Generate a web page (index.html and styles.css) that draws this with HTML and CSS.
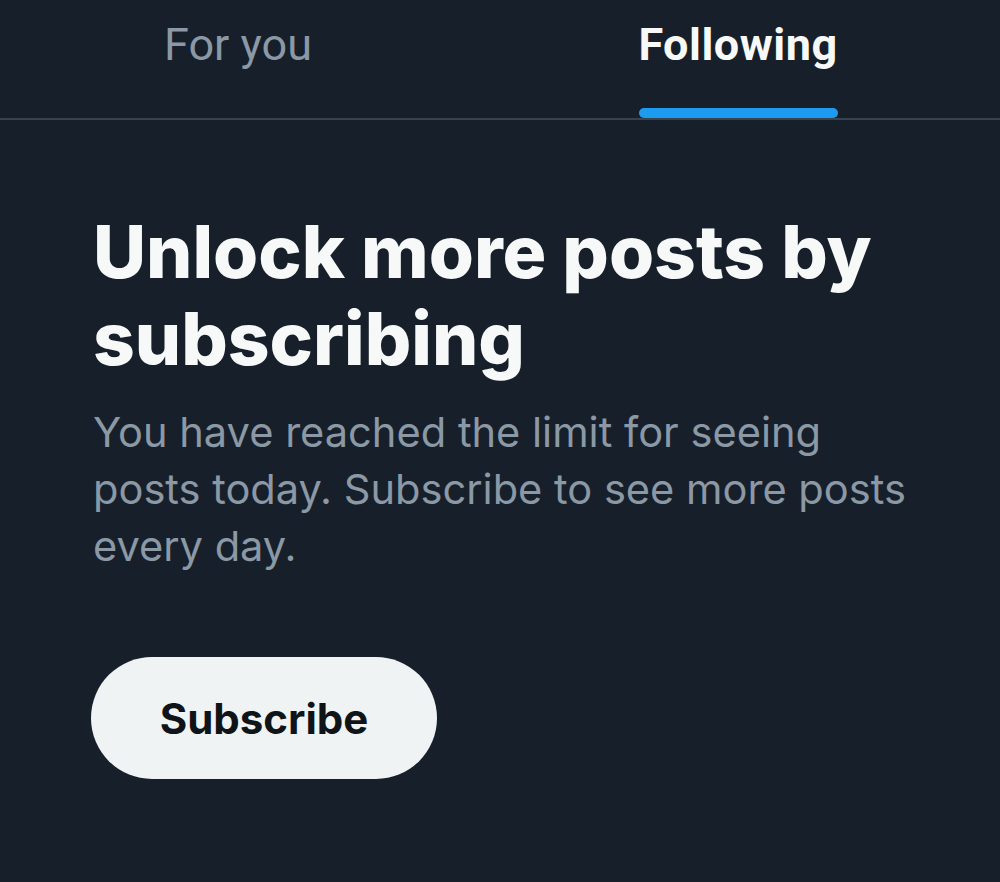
FILE: index.html
```html
<!DOCTYPE html>
<html lang="en">
<head>
    <meta charset="UTF-8">
    <meta name="viewport" content="width=device-width, initial-scale=1.0">
    <title>Following</title>
    <link rel="stylesheet" href="styles.css">
</head>
<body>
    <header class="tabs">
        <a class="tab" href="#">
            <span class="tab-label">For you</span>
        </a>
        <a class="tab active" href="#">
            <span class="tab-label">Following</span>
        </a>
    </header>
    <main class="limit">
        <h1 class="limit-title">Unlock more posts by subscribing</h1>
        <p class="limit-text">You have reached the limit for seeing posts today. Subscribe to see more posts every day.</p>
        <a class="subscribe-btn" href="#">Subscribe</a>
    </main>
</body>
</html>
```

FILE: styles.css
```css
* {
    padding: 0;
    margin: 0;
    box-sizing: border-box;
}

body {
    background: #17202a;
    font-family: Inter, "Noto Sans", sans-serif;
    overflow: hidden;
}

.tabs {
    display: flex;
    height: 120px;
    margin-left: -12px;
    border-bottom: 2px solid #38444d;
}

.tab {
    width: 500px;
    display: flex;
    justify-content: center;
    text-decoration: none;
}

.tab-label {
    position: relative;
    padding-top: 17px;
    font-family: Roboto, "Liberation Sans", sans-serif;
    font-size: 45px;
    line-height: 56px;
    color: #8b98a5;
}

.tab.active .tab-label {
    color: #f7f9f9;
    font-weight: 700;
    letter-spacing: 0.5px;
}

/* blue bar under the active tab */
.tab.active .tab-label::after {
    content: "";
    position: absolute;
    left: 1px;
    right: 0;
    top: 108px;
    height: 10px;
    border-radius: 5px;
    background: #1d9bf0;
}

.limit {
    padding: 88px 80px 0 93px;
}

.limit-title {
    font-size: 73px;
    line-height: 87px;
    font-weight: 800;
    color: #f7f9f9;
}

.limit-text {
    margin-top: 22px;
    font-size: 41.6px;
    line-height: 57px;
    color: #8b98a5;
}

.subscribe-btn {
    display: inline-flex;
    align-items: center;
    justify-content: center;
    width: 346px;
    height: 122px;
    margin-top: 82px;
    margin-left: -2px;
    border-radius: 61px;
    background: #eff3f4;
    color: #0f1419;
    font-size: 42px;
    font-weight: 700;
    text-decoration: none;
}
```
